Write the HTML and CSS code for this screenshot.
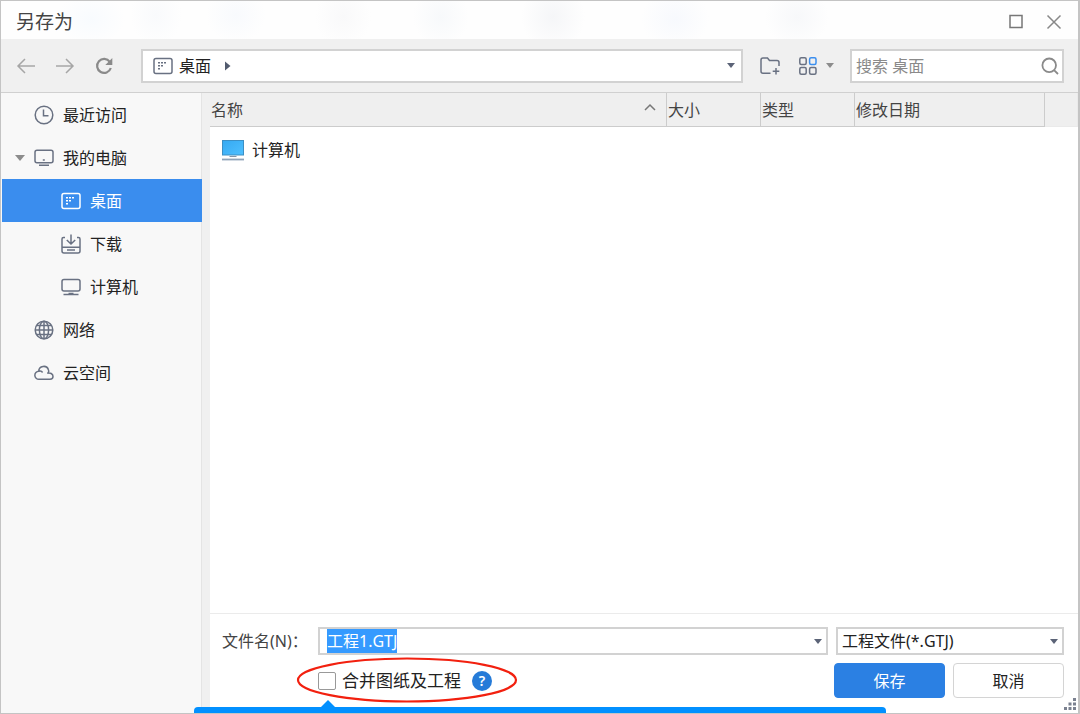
FILE: index.html
```html
<!DOCTYPE html>
<html lang="zh-CN">
<head>
  <meta charset="UTF-8">
  <title>另存为</title>
  <link rel="stylesheet" href="styles.css">
</head>
<body>
  <div class="dialog">
    <header class="titlebar">
      <h1>另存为</h1>
      <button class="icon-btn" aria-label="最大化">
        <svg width="16" height="16" viewBox="0 0 16 16"><rect x="2" y="1.500" width="12" height="12" fill="none" stroke="#777" stroke-width="1.500"/></svg>
      </button>
      <button class="icon-btn" aria-label="关闭">
        <svg width="16" height="16" viewBox="0 0 16 16"><path d="M1.500 1.500 14.500 14.500M14.500 1.500 1.500 14.500" fill="none" stroke="#888" stroke-width="1.500"/></svg>
      </button>
    </header>

    <div class="toolbar">
      <div class="nav-buttons">
        <button class="icon-btn" aria-label="后退">
          <svg width="20" height="18" viewBox="0 0 20 18"><path d="M19 9H2M9 2 2 9l7 7" fill="none" stroke="#a6a6a6" stroke-width="1.500"/></svg>
        </button>
        <button class="icon-btn" aria-label="前进">
          <svg width="20" height="18" viewBox="0 0 20 18"><path d="M1 9h17M11 2l7 7-7 7" fill="none" stroke="#a6a6a6" stroke-width="1.500"/></svg>
        </button>
        <button class="icon-btn" aria-label="刷新">
          <svg width="20" height="18" viewBox="0 0 20 18"><path d="M15.800 4.800A7 7 0 1 0 16.800 11" fill="none" stroke="#8a8a8a" stroke-width="2.200"/><path d="M18.300 1v7h-7z" fill="#8a8a8a"/></svg>
        </button>
      </div>
      <div class="address">
        <button class="icon-btn crumb">
          <svg class="line-icon" width="20" height="18" viewBox="0 0 20 18"><rect x="1" y="1.500" width="18" height="15" rx="2"/><path d="M5 5.700h2M8 5.700h2M11 5.700h2M5 8.700h2M8 8.700h2M5 11.700h2" stroke-width="1.500"/></svg>
          桌面
        </button>
        <button class="icon-btn" aria-label="展开路径">
          <svg width="6" height="10" viewBox="0 0 6 10"><path d="M0 0.500v9L5.500 5z" fill="#525b6e"/></svg>
        </button>
        <button class="icon-btn address-arrow" aria-label="历史位置">
          <svg width="8" height="5" viewBox="0 0 8 5"><path d="M0 0h8L4 5z" fill="#5b6377"/></svg>
        </button>
      </div>
      <button class="icon-btn" aria-label="新建文件夹">
        <svg class="line-icon" width="20" height="18" viewBox="0 0 20 18"><path d="M10.500 16.200H3a2 2 0 0 1-2-2V3a2 2 0 0 1 2-2h4.500l2 2.500H17a2 2 0 0 1 2 2V9M16 11v6.500M12.700 14.200h6.600"/></svg>
      </button>
      <button class="icon-btn view-btn" aria-label="视图">
        <svg class="line-icon" width="20" height="20" viewBox="0 0 20 20"><rect x="1.800" y="1.800" width="6.400" height="6.600" rx="1.500"/><rect x="1.800" y="11.600" width="6.400" height="6.600" rx="1.500"/><rect x="11.600" y="11.600" width="6.400" height="6.600" rx="1.500"/><rect x="11.600" y="1.800" width="6.400" height="6.600" rx="1.500" stroke="#3a8eef"/></svg>
        <svg width="8" height="5" viewBox="0 0 8 5"><path d="M0 0h8L4 5z" fill="#8c8c8c"/></svg>
      </button>
      <div class="search">
        <input type="text" placeholder="搜索 桌面" aria-label="搜索">
        <button class="icon-btn" aria-label="开始搜索">
          <svg width="18" height="18" viewBox="0 0 18 18"><path d="M13.300 13.300 17 17M15 8.300a6.800 6.800 0 1 1-13.600 0 6.800 6.800 0 0 1 13.600 0z" fill="none" stroke="#8a8a8a" stroke-width="1.800"/></svg>
        </button>
      </div>
    </div>

    <div class="content">
      <nav class="sidebar">
        <a href="#recent">
          <svg class="line-icon" width="20" height="20" viewBox="0 0 20 20"><circle cx="10" cy="10" r="8.800"/><path d="M9.500 4.500v6.200h5"/></svg>
          最近访问
        </a>
        <a href="#computer" class="open">
          <svg width="10" height="6" viewBox="0 0 10 6"><path d="M0 0h10L5 6z" fill="#8c8c8c"/></svg>
          <svg class="line-icon" width="20" height="20" viewBox="0 0 20 20"><rect x="1" y="2.300" width="18" height="12.500" rx="2"/><path d="M8.800 12h2M5 17.300h10"/></svg>
          我的电脑
        </a>
        <a href="#desktop" class="child active">
          <svg class="line-icon" width="20" height="18" viewBox="0 0 20 18"><rect x="1" y="1.500" width="18" height="15" rx="2"/><path d="M5 5.700h2M8 5.700h2M11 5.700h2M5 8.700h2M8 8.700h2M5 11.700h2" stroke-width="1.500"/></svg>
          桌面
        </a>
        <a href="#download" class="child">
          <svg class="line-icon" width="20" height="20" viewBox="0 0 20 20"><path d="M4 3.500H2.500A1.500 1.500 0 0 0 1 5v12a2 2 0 0 0 2 2h14a2 2 0 0 0 2-2V5a1.500 1.500 0 0 0-1.500-1.500H16M1 13.200h18M6 16.100h8M10 .500v9M5.800 6 10 10l4.200-4"/></svg>
          下载
        </a>
        <a href="#this-pc" class="child">
          <svg class="line-icon" width="20" height="18" viewBox="0 0 20 18"><rect x="1" y="1.500" width="18" height="11.500" rx="2"/><path d="M2.500 16.600h15M7.500 15.500h5"/></svg>
          计算机
        </a>
        <a href="#network">
          <svg class="line-icon" width="20" height="20" viewBox="0 0 20 20"><circle cx="10" cy="10" r="8.800"/><ellipse cx="10" cy="10" rx="4.600" ry="8.800"/><path d="M10 1v18M1 10h18M2.500 5.500h15M2.500 14.500h15"/></svg>
          网络
        </a>
        <a href="#cloud">
          <svg class="line-icon" width="20" height="20" viewBox="0 0 20 20"><path d="M5 16.300a4 4 0 0 1-.3-8A5 5 0 0 1 14.500 7c.5 1 .2 2-.3 2.800M5 8.200c1.500-.4 3 .3 3.600 1.300M13.200 10.300c3-1 5.800.5 5.800 3 0 1.700-1.200 3-3 3H5"/></svg>
          云空间
        </a>
      </nav>

      <main>
        <div class="files">
          <table>
            <thead>
              <tr>
                <th class="col-name">
                  <div class="sort">
                    名称
                    <svg width="12" height="14" viewBox="0 0 12 14"><path d="M1 7l5-5 5 5" fill="none" stroke="#777" stroke-width="1.500"/></svg>
                  </div>
                </th>
                <th class="col-small">大小</th>
                <th class="col-small">类型</th>
                <th class="col-date">修改日期</th>
                <th class="col-rest"></th>
              </tr>
            </thead>
            <tbody>
              <tr>
                <td colspan="5">
                  <div class="file">
                    <svg width="24" height="24" viewBox="0 0 24 24">
                      <defs><linearGradient id="screen" x1="0" y1="0" x2="1" y2="1"><stop offset="0" stop-color="#35a9f2"/><stop offset="1" stop-color="#4fc0ff"/></linearGradient></defs>
                      <rect x="1.500" y="2.500" width="21" height="14.500" fill="url(#screen)" stroke="#3c8fc4"/>
                      <path d="M9 18h6l1 1H8z" fill="#8494a6"/><path d="M1 21.500h22" stroke="#8fa3b8" stroke-width="1.800"/>
                    </svg>
                    计算机
                  </div>
                </td>
              </tr>
            </tbody>
          </table>
        </div>

        <form class="save-form" onsubmit="return false">
          <label class="name-label" for="filename">文件名(N)：</label>
          <div class="combo">
            <input type="text" id="filename" value="工程1.GTJ">
            <button type="button" class="icon-btn" aria-label="文件名列表">
              <svg width="8" height="5" viewBox="0 0 8 5"><path d="M0 0h8L4 5z" fill="#5b6377"/></svg>
            </button>
          </div>
          <div class="combo type-combo">
            <select aria-label="保存类型">
              <option>工程文件(*.GTJ)</option>
            </select>
            <svg class="select-arrow" width="8" height="5" viewBox="0 0 8 5"><path d="M0 0h8L4 5z" fill="#5b6377"/></svg>
          </div>

          <div class="merge">
            <input type="checkbox" id="merge">
            <label for="merge">合并图纸及工程</label>
            <button type="button" class="help" aria-label="帮助">?</button>
            <svg class="mark" width="222" height="46" viewBox="0 0 222 46"><ellipse cx="111" cy="23" rx="109" ry="21.500" fill="none" stroke="#f2200f" stroke-width="2.200"/></svg>
            <div class="tip"></div>
          </div>
          <div class="actions">
            <button type="submit" class="btn primary">保存</button>
            <button type="button" class="btn">取消</button>
          </div>
        </form>
      </main>
    </div>

    <svg class="grip" width="12" height="12" viewBox="0 0 12 12"><path d="M9 0h3v3H9zM9 4.500h3v3H9zM4.500 4.500h3v3h-3zM9 9h3v3H9zM4.500 9h3v3h-3zM0 9h3v3H0z" fill="#7b8190"/></svg>
  </div>

  <script>
    const filename = document.getElementById("filename");
    filename.focus();
    filename.select();
  </script>
</body>
</html>
```
FILE: styles.css
```css
* {
  box-sizing: border-box;
}

body {
  margin: 0;
  color: #222;
  font-family: "Noto Sans", "Noto Sans CJK SC", sans-serif;
  font-size: 16px;
  line-height: 24px;
}

button, input, select {
  font: inherit;
  color: inherit;
}

.dialog {
  position: relative;
  display: flex;
  flex-direction: column;
  height: 100vh;
  border: 2px solid #c4c4c4;
  border-width: 1px 2px 1px 1px;
  background: #f0f0f0;
  overflow: hidden;
}

.icon-btn {
  display: flex;
  align-items: center;
  padding: 0;
  border: none;
  background: none;
  cursor: pointer;
}

.line-icon {
  fill: none;
  stroke: #697182;
  stroke-width: 1.5;
}

/* title bar */
.titlebar {
  display: flex;
  align-items: center;
  gap: 22px;
  height: 38px;
  padding: 3px 16px 0 15px;
  background:
    radial-gradient(ellipse 34px 26px at 90px 18px, #f8fbfe, transparent),
    radial-gradient(ellipse 26px 30px at 155px 14px, #f9fafc, transparent),
    radial-gradient(ellipse 30px 28px at 235px 14px, #f8fafd, transparent),
    radial-gradient(ellipse 28px 30px at 342px 16px, #f9f9fa, transparent),
    radial-gradient(ellipse 28px 30px at 440px 16px, #f7f9fb, transparent),
    radial-gradient(ellipse 32px 34px at 552px 16px, #f5f6f8, transparent),
    radial-gradient(ellipse 34px 30px at 674px 18px, #f7f9fd, transparent),
    radial-gradient(ellipse 32px 30px at 796px 16px, #f7f8fa, transparent),
    #fefefe;
}

.titlebar h1 {
  flex: 1;
  margin: 0;
  font-size: 19px;
  font-weight: 400;
  color: #444;
}

/* toolbar */
.toolbar {
  display: flex;
  align-items: center;
  height: 54px;
  padding: 0 14px 0 15px;
  border-bottom: 1px solid #d0d0d0;
}

.nav-buttons {
  display: flex;
  gap: 19px;
  margin-right: 27px;
}

.address, .search, .combo {
  display: flex;
  align-items: center;
  border: 2px solid #d2d2d2;
  background: #fff;
}

.address {
  flex: 1;
  gap: 14px;
  height: 34px;
  margin-right: 17px;
  padding: 0 6px 0 10px;
}

.crumb {
  gap: 6px;
}

.address-arrow {
  margin-left: auto;
}

.view-btn {
  gap: 8px;
  margin: 0 16px 0 18px;
}

.search {
  width: 214px;
  height: 34px;
  padding: 0 3px 0 4px;
}

.search input, .combo input {
  flex: 1;
  min-width: 0;
  padding: 0;
  border: none;
  outline: none;
  background: none;
}

.search input::placeholder {
  color: #8a8a8a;
}

/* sidebar */
.content {
  flex: 1;
  display: flex;
  min-height: 0;
}

.sidebar {
  width: 201px;
  margin-right: 8px;
  border-right: 1px solid #e4e4e4;
  background: #f8f8f8;
}

.sidebar a {
  display: flex;
  align-items: center;
  gap: 9px;
  height: 43px;
  padding-left: 33px;
  color: inherit;
  text-decoration: none;
}

.sidebar a.open {
  padding-left: 14px;
}

.sidebar a.child {
  padding-left: 60px;
}

.sidebar a.active {
  margin: 0 -1px 0 1px;
  padding-left: 59px;
  background: #3a8dee;
  color: #fff;
}

.active .line-icon {
  stroke: #fff;
}

main {
  flex: 1;
  display: flex;
  flex-direction: column;
  min-width: 0;
  background: #fff;
}

/* file list */
.files {
  flex: 1;
}

table {
  width: 100%;
  table-layout: fixed;
  border-collapse: separate;
  border-spacing: 0;
}

th {
  height: 34px;
  padding: 0 0 0 1px;
  border-right: 1px solid #ccc;
  border-bottom: 1px solid #ccc;
  background: #efefef;
  font-weight: 400;
  text-align: left;
  color: #444;
}

.col-small {
  width: 94px;
}

.col-date {
  width: 190px;
}

th.col-rest {
  width: 33px;
  border-color: #eaeaea;
}

.sort {
  display: flex;
  align-items: center;
  justify-content: space-between;
  padding-right: 10px;
}

td {
  padding: 0;
}

.file {
  display: flex;
  align-items: center;
  gap: 7px;
  height: 46px;
  padding-left: 11px;
}

/* bottom form */
.save-form {
  display: grid;
  grid-template-columns: 88px 1fr 228px;
  gap: 8px;
  align-items: center;
  padding: 13px 14px 15px 12px;
  border-top: 1px solid #ebebeb;
}

.name-label {
  white-space: nowrap;
  color: #444;
}

.combo {
  position: relative;
  height: 28px;
  padding: 0 4px 0 7px;
}

.type-combo {
  padding-left: 4px;
}

#filename::selection {
  background: rgba(51, 153, 255, 0.99);
  color: #fff;
}

.combo select {
  width: 100%;
  height: 24px;
  padding: 0;
  border: none;
  outline: none;
  background: none;
  appearance: none;
}

.select-arrow {
  position: absolute;
  right: 4px;
  pointer-events: none;
}

.merge {
  position: relative;
  grid-column: 2;
  display: flex;
  align-items: center;
  justify-self: start;
  gap: 6px;
  font-size: 17px;
}

.merge input {
  width: 18px;
  height: 18px;
  margin: 0;
  border: 1px solid #999;
  border-radius: 2px;
  background: #fff;
  appearance: none;
}

.help {
  width: 20px;
  height: 20px;
  margin-left: 5px;
  padding: 0;
  border: none;
  border-radius: 50%;
  background: #267bd8;
  color: #fff;
  font-size: 14px;
  font-weight: 600;
  line-height: 20px;
}

.mark {
  position: absolute;
  top: -12px;
  left: -22px;
  pointer-events: none;
}

/* tip bubble under the checkbox */
.tip {
  position: absolute;
  top: 38px;
  left: -124px;
  width: 692px;
  height: 60px;
  border-radius: 4px;
  background: #0290ff;
}

.tip::before {
  content: "";
  position: absolute;
  top: -7px;
  left: 127px;
  border: 7px solid transparent;
  border-top: none;
  border-bottom-color: #0290ff;
}

.actions {
  display: flex;
  gap: 8px;
  margin-left: -2px;
}

.btn {
  flex: 1;
  height: 35px;
  padding: 0;
  border: 1px solid #d4d4d4;
  border-radius: 4px;
  background: #fff;
}

.btn.primary {
  border-color: #2b80e3;
  background: #2b80e3;
  color: #fff;
}

.grip {
  position: absolute;
  right: 2px;
  bottom: 3px;
}
```
